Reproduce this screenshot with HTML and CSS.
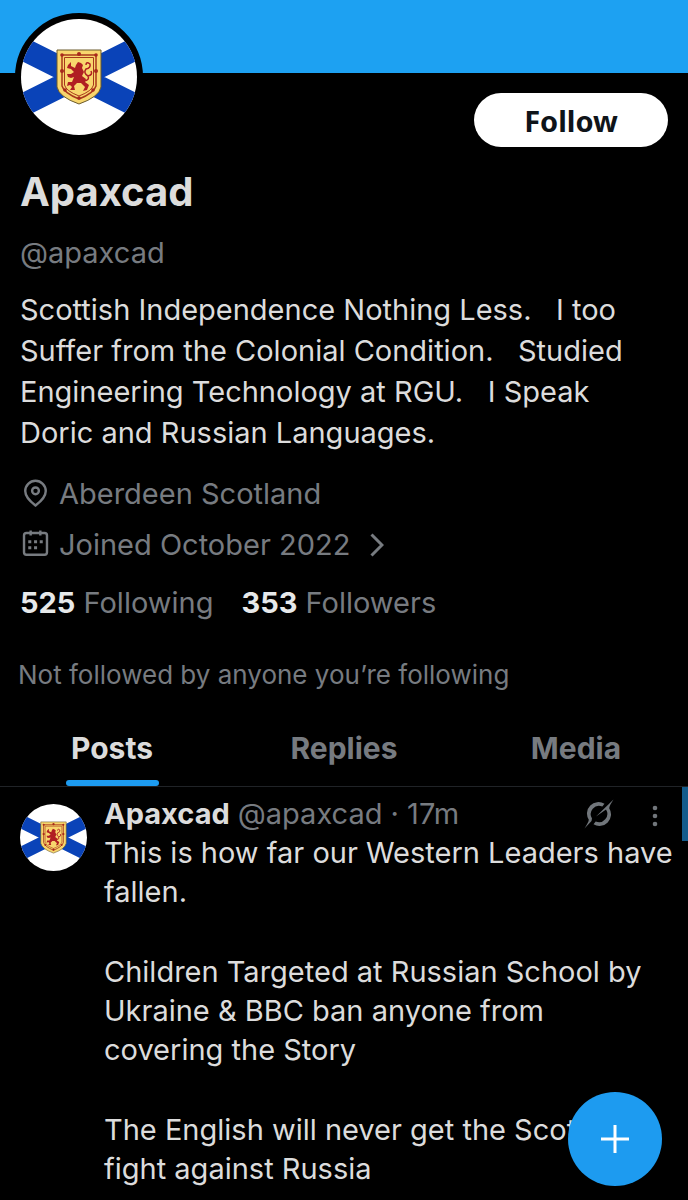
FILE: index.html
```
<!DOCTYPE html>
<html lang="en">
<head>
	<title>Apaxcad (@apaxcad)</title>
	<meta charset="utf-8">
	<meta name="viewport" content="width=device-width,initial-scale=1">
	<link rel="stylesheet" href="styles.css">
</head>
<body>

	<!-- flag, used by both avatars -->
	<svg class="defs" width="0" height="0" aria-hidden="true">
		<symbol id="flag" viewBox="0 0 116 116">
			<rect width="116" height="116" fill="#fff"/>
			<path d="M-4 27L120 89M-4 89L120 27" stroke="#0a43b8" stroke-width="23"/>
			<path d="M36 31H80V68Q78 78 58 85Q38 78 36 68Z" fill="#f8d66d" stroke="#6b5a2c" stroke-width="1"/>
			<path d="M41 36H75V67Q73 74 58 80Q43 74 41 67Z" fill="none" stroke="#a8381c" stroke-width="1.500"/>
			<path d="M43.500 38.500H72.500V66Q71 72 58 77Q45 72 43.500 66Z" fill="none" stroke="#a8381c" stroke-width="1"/>
			<g fill="#a8281c">
				<circle cx="41" cy="36" r="1.800"/><circle cx="58" cy="35" r="2"/><circle cx="75" cy="36" r="1.800"/>
				<circle cx="41" cy="52" r="2"/><circle cx="75" cy="52" r="2"/>
				<circle cx="44" cy="71" r="1.800"/><circle cx="72" cy="71" r="1.800"/><circle cx="58" cy="79" r="1.800"/>
			</g>
			<path d="M55 46L57 43L60 44L62 46L61 49L63 53L61 57L65 60L64 63L68 66L66 71L62 72L64 68L60 64L56 64L53 67L54 71L49 71L51 68L49 66L46 67L47 63L51 63L53 58L50 59L47 58L46 55L50 55L53 53L50 50L46 49L47 46L50 43L50 47L54 49Z" fill="#b01e22"/>
			<path d="M63 62Q69 61 67 57Q62 54 65 50Q70 49 69 45Q65 42 65 46M67 57Q72 56 70 52" fill="none" stroke="#b01e22" stroke-width="1.500"/>
		</symbol>
	</svg>

	<header class="banner"></header>

	<main>
		<section class="profile">
			<div class="profile-top">
				<svg class="avatar" role="img" aria-label="Apaxcad"><use href="#flag"/></svg>
				<button type="button" class="follow-btn">Follow</button>
			</div>

			<h1 class="name">Apaxcad</h1>
			<p class="handle">@apaxcad</p>
			<p class="bio">Scottish Independence Nothing Less. &nbsp; I too Suffer from the Colonial Condition. &nbsp; Studied Engineering Technology at RGU. &nbsp; I Speak Doric and Russian Languages.</p>

			<p class="meta">
				<svg class="icon" viewBox="0 0 24 24"><path d="M12 1.500a8.500 8.500 0 0 0-8.500 8.500c0 5 4.500 9 8.500 12 4-3 8.500-7 8.500-12a8.500 8.500 0 0 0-8.500-8.500z"/><circle cx="12" cy="9.800" r="2.800"/></svg>
				<span>Aberdeen Scotland</span>
			</p>
			<a class="meta" href="#">
				<svg class="icon" viewBox="0 0 24 24"><rect x="2.500" y="2.500" width="19" height="18" rx="2"/><path d="M8 .5v4M16 .5v4"/><path class="dots" d="M6 8.500h2.500v2.500H6zM10.800 8.500h2.500v2.500h-2.500zM15.500 8.500H18v2.500h-2.500zM6 13.500h2.500v2.500H6zM10.800 13.500h2.500v2.500h-2.500z"/></svg>
				<span>Joined October 2022</span>
				<svg class="chevron" viewBox="0 0 14 24"><path d="M1.500 1.500L12 12L1.500 22.500"/></svg>
			</a>

			<div class="counts">
				<a href="#"><strong>525</strong> Following</a>
				<a href="#"><strong>353</strong> Followers</a>
			</div>
			<p class="known">Not followed by anyone you’re following</p>
		</section>

		<nav class="tabs">
			<div class="tabs-row">
				<a class="tab active" href="#">Posts</a>
				<a class="tab" href="#">Replies</a>
				<a class="tab" href="#">Media</a>
			</div>
		</nav>

		<article class="post">
			<svg class="avatar-small" role="img" aria-label="Apaxcad"><use href="#flag"/></svg>
			<div class="post-body">
				<div class="post-head">
					<strong>Apaxcad</strong>
					<span class="post-info">@apaxcad · 17m</span>
					<button type="button" class="icon-btn grok" aria-label="Explain this post">
						<svg width="30" height="30" viewBox="0 0 30 30">
							<path d="M20.500 4.800A11.500 11.500 0 0 0 4.800 20.800C4.800 23 2.500 26 .5 29.500L7.500 22L8 19.500A8.300 8.300 0 0 1 18.300 7.500Z"/>
							<path d="M9.500 25.200A11.500 11.500 0 0 0 25.200 9.200C25.200 7 27.500 4 29.500 .5L12 17.500L22 10.500A8.300 8.300 0 0 1 11.700 22.500Z"/>
						</svg>
					</button>
					<button type="button" class="icon-btn" aria-label="More">
						<svg width="6" height="22" viewBox="0 0 6 22"><circle cx="3" cy="3" r="2.300"/><circle cx="3" cy="11" r="2.300"/><circle cx="3" cy="19" r="2.300"/></svg>
					</button>
				</div>
				<div class="post-text">
					<p>This is how far our Western Leaders have fallen.</p>
					<p>Children Targeted at Russian School by Ukraine &amp; BBC ban anyone from<br>covering the Story</p>
					<p>The English will never get the Scots to fight against Russia</p>
				</div>
			</div>
			<span class="edge"></span>
		</article>
	</main>

	<button type="button" class="compose" aria-label="New post">
		<svg width="28" height="28" viewBox="0 0 28 28"><path d="M14 0V28M0 14H28"/></svg>
	</button>

</body>
</html>
```
FILE: styles.css
```
*{
	margin: 0;
	padding: 0;
	box-sizing: border-box;
}

body{
	background: #000;
	color: #dcdcdc;
	font-family: Inter, "Liberation Sans", sans-serif;
	font-size: 29px;
	line-height: 41px;
	overflow-x: hidden;
}
a{
	color: inherit;
	text-decoration: none;
}
button{
	border: 0;
	font: inherit;
	cursor: pointer;
}
.defs{
	position: absolute;
}

.banner{
	height: 73px;
	background: #1da1f2;
}

.profile{
	padding: 0 20px;
}
.profile-top{
	display: flex;
	justify-content: space-between;
	align-items: flex-end;
	margin-top: -60px;
}
.avatar{
	width: 128px;
	height: 128px;
	margin-left: -5px;
	border: 6px solid #000;
	border-radius: 50%;
	background: #000;
}
.follow-btn{
	width: 194px;
	height: 54px;
	margin-bottom: -6px;
	border-radius: 27px;
	background: #fff;
	color: #0f1419;
	font-family: "Noto Sans", sans-serif;
	font-weight: 700;
}

.name{
	margin-top: 26px;
	font-size: 40px;
	line-height: 50px;
}
.handle{
	margin-top: 15px;
	color: #777b80;
}
.bio{
	margin-top: 16px;
}
.meta{
	display: flex;
	align-items: center;
	margin-top: 20px;
	color: #777b80;
}
.meta + .meta{
	margin-top: 10px;
}
.icon{
	width: 29px;
	height: 29px;
	margin: 0 9px 0 1px;
	fill: none;
	stroke: #777b80;
	stroke-width: 2;
}
.icon .dots{
	fill: #777b80;
	stroke: none;
}
.chevron{
	width: 14px;
	height: 24px;
	margin-left: 20px;
	fill: none;
	stroke: #777b80;
	stroke-width: 3;
}
.counts{
	display: flex;
	gap: 28px;
	margin-top: 17px;
	color: #777b80;
}
.counts strong{
	color: #e7e9ea;
}
.known{
	margin: 31px -2px 0;
	color: #777b80;
	font-size: 26px;
}

.tabs{
	margin-top: 19px;
	border-bottom: 1px solid #202327;
	overflow: hidden;
}
.tabs-row{
	display: grid;
	grid-template-columns: repeat(3, 1fr);
	margin: 0 -4px;
}
.tab{
	display: flex;
	flex-direction: column;
	align-items: center;
	padding-top: 14px;
	color: #777b80;
	font-size: 30px;
	font-weight: 700;
}
.tab::after{
	content: "";
	width: 93px;
	height: 6px;
	margin-top: 11px;
	border-radius: 3px;
}
.active{
	color: #dcdcdc;
}
.active::after{
	background: #1d9bf0;
}

.post{
	position: relative;
	display: flex;
	gap: 17px;
	padding: 8px 12px 10px 20px;
}
.avatar-small{
	flex: none;
	width: 67px;
	height: 67px;
	margin-top: 9px;
	border-radius: 50%;
}
.post-body{
	flex: 1;
	min-width: 0;
}
.post-head{
	display: flex;
	align-items: center;
	gap: 8px;
	line-height: 38px;
}
.post-info{
	color: #777b80;
}
.icon-btn{
	display: flex;
	padding: 4px 18px 0 12px;
	background: none;
	fill: #71767b;
}
.grok{
	margin-left: auto;
	padding-top: 0;
}
.post-text{
	line-height: 39px;
}
.post-text p + p{
	margin-top: 41px;
}
.edge{
	position: absolute;
	top: 0;
	right: 0;
	width: 6px;
	height: 54px;
	background: #135b8c;
}

.compose{
	position: fixed;
	right: 26px;
	bottom: 14px;
	display: flex;
	align-items: center;
	justify-content: center;
	width: 94px;
	height: 94px;
	border-radius: 50%;
	background: #1d9bf0;
	fill: none;
	stroke: #fff;
	stroke-width: 3;
}
```
